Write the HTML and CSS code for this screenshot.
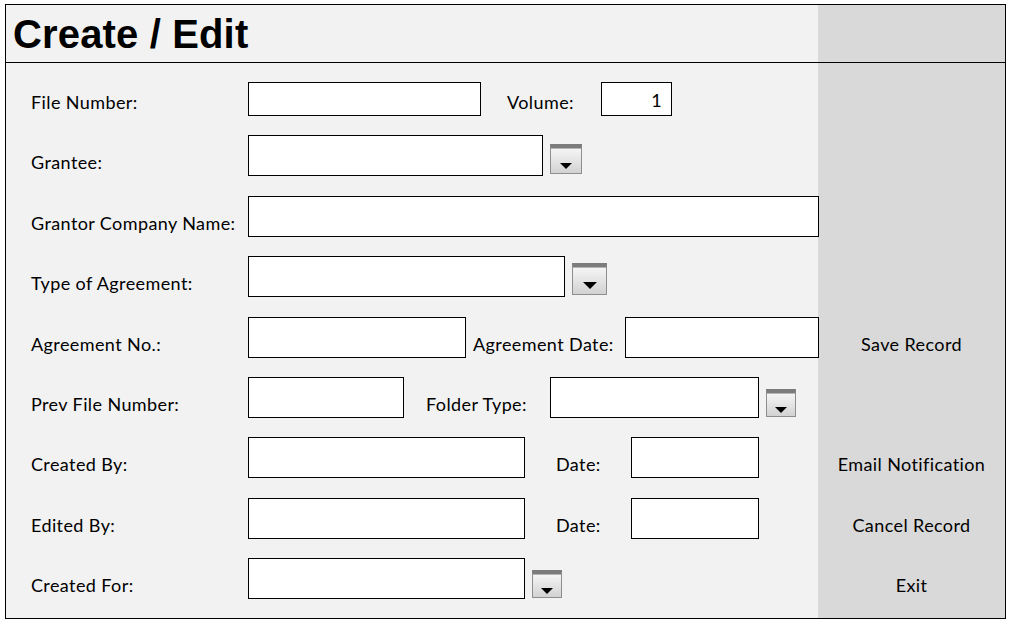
FILE: index.html
```html
<!DOCTYPE html>
<html lang="en">
<head>
<meta charset="utf-8">
<title>Create / Edit</title>
<link rel="stylesheet" href="styles.css">
</head>
<body>
<div class="frame">
  <div class="header">
    <h1 class="title">Create / Edit</h1>
    <div class="header-side"></div>
  </div>
  <form class="body">
    <div class="row r1">
      <label class="lbl">File Number:</label>
      <input class="field short w-file" type="text">
      <label class="lbl2 l-volume">Volume:</label>
      <input class="field short w-vol num" type="text" value="1">
    </div>
    <div class="row r2">
      <label class="lbl">Grantee:</label>
      <input class="field w-grantee" type="text">
      <button type="button" class="dd dd-md" aria-label="Open list"></button>
    </div>
    <div class="row r3">
      <label class="lbl">Grantor Company Name:</label>
      <input class="field w-grantor" type="text">
    </div>
    <div class="row r4">
      <label class="lbl">Type of Agreement:</label>
      <input class="field w-type" type="text">
      <button type="button" class="dd dd-lg" aria-label="Open list"></button>
    </div>
    <div class="row r5">
      <label class="lbl">Agreement No.:</label>
      <input class="field w-agno" type="text">
      <label class="lbl2 l-agdate">Agreement Date:</label>
      <input class="field w-agdate" type="text">
    </div>
    <div class="row r6">
      <label class="lbl">Prev File Number:</label>
      <input class="field w-prev" type="text">
      <label class="lbl2 l-folder">Folder Type:</label>
      <input class="field w-folder" type="text">
      <button type="button" class="dd dd-sm" aria-label="Open list"></button>
    </div>
    <div class="row r7">
      <label class="lbl">Created By:</label>
      <input class="field w-person" type="text">
      <label class="lbl2 l-date">Date:</label>
      <input class="field w-date" type="text">
    </div>
    <div class="row r8">
      <label class="lbl">Edited By:</label>
      <input class="field w-person" type="text">
      <label class="lbl2 l-date">Date:</label>
      <input class="field w-date" type="text">
    </div>
    <div class="row r9">
      <label class="lbl">Created For:</label>
      <input class="field w-person" type="text">
      <button type="button" class="dd dd-sm" aria-label="Open list"></button>
    </div>

    <button type="button" class="action a5">Save Record</button>
    <button type="button" class="action a7">Email Notification</button>
    <button type="button" class="action a8">Cancel Record</button>
    <button type="button" class="action a9">Exit</button>
  </form>
</div>
</body>
</html>
```

FILE: styles.css
```css
html, body {
  margin: 0;
  padding: 0;
  background: #ffffff;
}

.frame {
  margin: 4px 0 0 5px;
  width: 1001px;
  border: 1px solid #000;
  box-sizing: border-box;
}

.header {
  display: flex;
  height: 58px;
  border-bottom: 1px solid #000;
  box-sizing: border-box;
}

.title {
  width: 812px;
  flex: none;
  margin: 0;
  padding: 9px 0 0 7px;
  box-sizing: border-box;
  background: #f2f2f2;
  font: 700 40px/40px "Liberation Sans", Arial, sans-serif;
  letter-spacing: 0.15px;
  color: #000;
}

.header-side {
  flex: 1;
  background: #d9d9d9;
}

.body {
  display: grid;
  grid-template-columns: 812px 1fr;
  grid-template-rows: 34px repeat(8, 41px);
  row-gap: 19.4px;
  padding: 19px 0;
  margin: 0;
  background: linear-gradient(to right, #f2f2f2 812px, #d9d9d9 812px);
  font: 400 18px/20px Lato, "Noto Sans", sans-serif;
  letter-spacing: 0.4px;
  color: #000;
}

.row {
  grid-column: 1;
  display: flex;
  align-items: flex-end;
  padding-left: 25px;
  min-width: 0;
}

.r1 { grid-row: 1; }
.r2 { grid-row: 2; }
.r3 { grid-row: 3; }
.r4 { grid-row: 4; }
.r5 { grid-row: 5; }
.r6 { grid-row: 6; }
.r7 { grid-row: 7; }
.r8 { grid-row: 8; }
.r9 { grid-row: 9; }

.lbl, .lbl2 {
  flex: none;
  padding-bottom: 4px;
  white-space: nowrap;
}

.lbl { width: 217px; }

.l-volume { margin-left: 26px; width: 94px; }
.l-agdate { margin-left: 7px; width: 152px; }
.l-folder { margin-left: 22px; width: 124px; }
.l-date { margin-left: 31px; width: 75px; }

.field {
  flex: none;
  height: 41px;
  margin: 0;
  padding: 0 8px;
  border: 1px solid #000;
  border-radius: 0;
  background: #fff;
  box-sizing: border-box;
  font: inherit;
  letter-spacing: inherit;
  color: #000;
  outline: none;
}

.field.short { height: 34px; }
.num { text-align: right; padding: 2px 9px 0 0; }

.w-file { width: 233px; }
.w-vol { width: 71px; }
.w-grantee { width: 295px; }
.w-grantor { width: 571px; }
.w-type { width: 317px; }
.w-agno { width: 218px; }
.w-agdate { width: 194px; }
.w-prev { width: 156px; }
.w-folder { width: 209px; }
.w-person { width: 277px; }
.w-date { width: 128px; }

.dd {
  flex: none;
  display: flex;
  align-items: flex-end;
  justify-content: center;
  margin: 0 0 2px 7px;
  padding: 0 0 4px;
  box-sizing: border-box;
  border: 1px solid #8e8e8e;
  border-top: 4px solid #7c7c7c;
  border-radius: 0;
  background: linear-gradient(#f6f6f6, #e6e6e6 45%, #d2d2d2);
  box-shadow: inset 0 1px 0 #b5b5b5;
  cursor: default;
}

.dd::after {
  content: "";
  width: 0;
  height: 0;
  border-left: 6px solid transparent;
  border-right: 6px solid transparent;
  border-top: 6px solid #000;
}

.dd-md { width: 32px; height: 30px; }
.dd-lg { width: 35px; height: 32px; padding-bottom: 5px; }
.dd-lg::after { border-left-width: 7px; border-right-width: 7px; border-top-width: 7px; }
.dd-sm { width: 30px; height: 28px; margin-bottom: 1px; padding-bottom: 3px; }

.action {
  grid-column: 2;
  align-self: end;
  margin: 0;
  padding: 0 0 4px;
  border: 0;
  background: transparent;
  font: inherit;
  letter-spacing: inherit;
  color: #000;
  text-align: center;
  white-space: nowrap;
}

.a5 { grid-row: 5; }
.a7 { grid-row: 7; }
.a8 { grid-row: 8; }
.a9 { grid-row: 9; }
```
